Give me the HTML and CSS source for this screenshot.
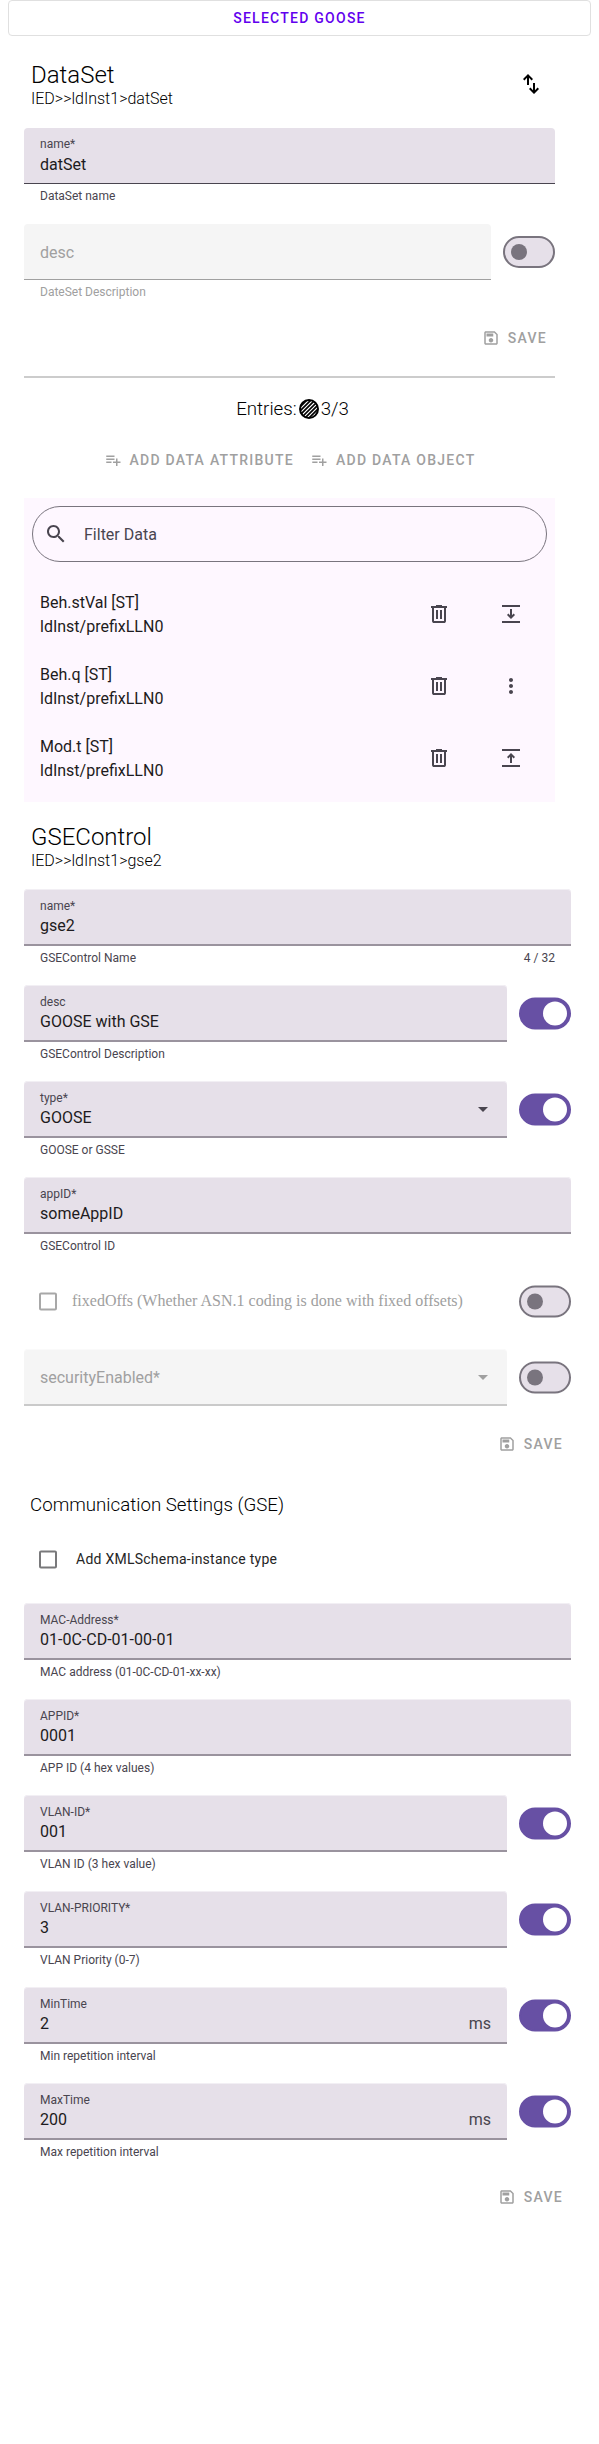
FILE: index.html
```html
<!DOCTYPE html>
<html lang="en">
<head>
<meta charset="utf-8">
<title>GOOSE editor</title>
<link rel="stylesheet" href="styles.css">
</head>
<body>
<svg class="defs" aria-hidden="true">
  <symbol id="save" viewBox="0 0 24 24"><path d="M17 3H5c-1.110 0-2 .9-2 2v14c0 1.100.89 2 2 2h14c1.100 0 2-.9 2-2V7l-4-4zm2 16H5V5h11.170L19 7.830V19zm-7-7c-1.660 0-3 1.340-3 3s1.340 3 3 3 3-1.340 3-3-1.340-3-3-3zM6 6h9v4H6z"/></symbol>
  <symbol id="add" viewBox="0 0 24 24"><path d="M14 10H3v2h11v-2zm0-4H3v2h11V6zm4 8v-4h-2v4h-4v2h4v4h2v-4h4v-2h-4zM3 16h7v-2H3v2z"/></symbol>
  <symbol id="trash" viewBox="0 -960 960 960"><path d="M280-120q-33 0-56.500-23.500T200-200v-520h-40v-80h200v-40h240v40h200v80h-40v520q0 33-23.500 56.500T680-120H280Zm400-600H280v520h400v-520ZM360-280h80v-360h-80v360Zm160 0h80v-360h-80v360ZM280-720v520-520Z"/></symbol>
  <symbol id="bottom" viewBox="0 0 24 24"><path d="M3 3h18v2H3zM3 19h18v2H3zM11 7h2v6.200l1.600-1.600L16 13l-4 4-4-4 1.400-1.400 1.600 1.600z"/></symbol>
  <symbol id="top" viewBox="0 0 24 24"><path d="M3 3h18v2H3zM3 19h18v2H3zM11 17h2v-6.200l1.600 1.600L16 11l-4-4-4 4 1.400 1.400 1.600-1.600z"/></symbol>
  <symbol id="more" viewBox="0 0 24 24"><path d="M12 8c1.100 0 2-.9 2-2s-.9-2-2-2-2 .9-2 2 .9 2 2 2zm0 2c-1.100 0-2 .9-2 2s.9 2 2 2 2-.9 2-2-.9-2-2-2zm0 6c-1.100 0-2 .9-2 2s.9 2 2 2 2-.9 2-2-.9-2-2-2z"/></symbol>
</svg>

<button class="select-button">SELECTED GOOSE</button>

<section class="dataset">
  <header class="header">
    <div>
      <h2>DataSet</h2>
      <p class="path">IED&gt;&gt;ldInst1&gt;datSet</p>
    </div>
    <svg class="icon swap" viewBox="0 -960 960 960"><path d="M320-440v-287L217-624l-57-56 200-200 200 200-57 56-103-103v287h-80ZM600-80 400-280l57-56 103 103v-287h80v287l103-103 57 56L600-80Z"/></svg>
  </header>
  <div class="row">
    <div class="field"><div class="box"><span class="label">name*</span><span class="value">datSet</span></div><div class="help"><span>DataSet name</span></div></div>
  </div>
  <div class="row">
    <div class="field disabled"><div class="box"><span class="placeholder">desc</span></div><div class="help"><span>DateSet Description</span></div></div>
    <div class="switch"><i></i></div>
  </div>
  <div class="save"><svg><use href="#save"/></svg>SAVE</div>
  <hr>
  <div class="entries">Entries:<svg class="hatched" viewBox="0 0 20 20"><defs><clipPath id="disc"><circle cx="10" cy="10" r="9"/></clipPath></defs><circle cx="10" cy="10" r="9" fill="#fff"/><path clip-path="url(#disc)" d="M-2 11 11-2M-2 15 15-2M-1 18 18-1M2 19 19 2M5 20 20 5M9 20 20 9" stroke="#000" stroke-width="1.700"/><circle cx="10" cy="10" r="9" fill="none" stroke="#000" stroke-width="2"/></svg>3/3</div>
  <div class="adders">
    <div class="action"><svg><use href="#add"/></svg>ADD DATA ATTRIBUTE</div>
    <div class="action"><svg><use href="#add"/></svg>ADD DATA OBJECT</div>
  </div>
  <div class="list">
    <div class="search"><svg class="icon" viewBox="0 0 24 24"><path d="M15.500 14h-.79l-.28-.27C15.410 12.590 16 11.110 16 9.500 16 5.910 13.090 3 9.500 3S3 5.910 3 9.500 5.910 16 9.500 16c1.610 0 3.090-.59 4.230-1.570l.27.28v.79l5 4.990L20.490 19l-4.990-5zm-6 0C7.010 14 5 11.990 5 9.500S7.010 5 9.500 5 14 7.010 14 9.500 11.990 14 9.500 14z"/></svg>Filter Data</div>
    <div class="item"><div class="names"><span>Beh.stVal [ST]</span><span>ldInst/prefixLLN0</span></div><svg class="icon"><use href="#trash"/></svg><svg class="icon"><use href="#bottom"/></svg></div>
    <div class="item"><div class="names"><span>Beh.q [ST]</span><span>ldInst/prefixLLN0</span></div><svg class="icon"><use href="#trash"/></svg><svg class="icon"><use href="#more"/></svg></div>
    <div class="item"><div class="names"><span>Mod.t [ST]</span><span>ldInst/prefixLLN0</span></div><svg class="icon"><use href="#trash"/></svg><svg class="icon"><use href="#top"/></svg></div>
  </div>
</section>

<section class="control">
  <header class="header">
    <div>
      <h2>GSEControl</h2>
      <p class="path">IED&gt;&gt;ldInst1&gt;gse2</p>
    </div>
  </header>
  <div class="row">
    <div class="field"><div class="box"><span class="label">name*</span><span class="value">gse2</span></div><div class="help"><span>GSEControl Name</span><span>4 / 32</span></div></div>
  </div>
  <div class="row">
    <div class="field"><div class="box"><span class="label">desc</span><span class="value">GOOSE with GSE</span></div><div class="help"><span>GSEControl Description</span></div></div>
    <div class="switch on"><i></i></div>
  </div>
  <div class="row">
    <div class="field"><div class="box select"><span class="label">type*</span><span class="value">GOOSE</span></div><div class="help"><span>GOOSE or GSSE</span></div></div>
    <div class="switch on"><i></i></div>
  </div>
  <div class="row">
    <div class="field"><div class="box"><span class="label">appID*</span><span class="value">someAppID</span></div><div class="help"><span>GSEControl ID</span></div></div>
  </div>
  <div class="row check-row">
    <div class="check muted"><i></i><span>fixedOffs (Whether ASN.1 coding is done with fixed offsets)</span></div>
    <div class="switch"><i></i></div>
  </div>
  <div class="row security">
    <div class="field disabled"><div class="box select"><span class="placeholder">securityEnabled*</span></div></div>
    <div class="switch"><i></i></div>
  </div>
  <div class="save"><svg><use href="#save"/></svg>SAVE</div>

  <h3>Communication Settings (GSE)</h3>
  <div class="check schema"><i></i><span>Add XMLSchema-instance type</span></div>
  <div class="row">
    <div class="field"><div class="box"><span class="label">MAC-Address*</span><span class="value">01-0C-CD-01-00-01</span></div><div class="help"><span>MAC address (01-0C-CD-01-xx-xx)</span></div></div>
  </div>
  <div class="row">
    <div class="field"><div class="box"><span class="label">APPID*</span><span class="value">0001</span></div><div class="help"><span>APP ID (4 hex values)</span></div></div>
  </div>
  <div class="row">
    <div class="field"><div class="box"><span class="label">VLAN-ID*</span><span class="value">001</span></div><div class="help"><span>VLAN ID (3 hex value)</span></div></div>
    <div class="switch on"><i></i></div>
  </div>
  <div class="row">
    <div class="field"><div class="box"><span class="label">VLAN-PRIORITY*</span><span class="value">3</span></div><div class="help"><span>VLAN Priority (0-7)</span></div></div>
    <div class="switch on"><i></i></div>
  </div>
  <div class="row">
    <div class="field"><div class="box"><span class="label">MinTime</span><span class="value">2<span class="suffix">ms</span></span></div><div class="help"><span>Min repetition interval</span></div></div>
    <div class="switch on"><i></i></div>
  </div>
  <div class="row">
    <div class="field"><div class="box"><span class="label">MaxTime</span><span class="value">200<span class="suffix">ms</span></span></div><div class="help"><span>Max repetition interval</span></div></div>
    <div class="switch on"><i></i></div>
  </div>
  <div class="save"><svg><use href="#save"/></svg>SAVE</div>
</section>
</body>
</html>
```
FILE: styles.css
```css
* { box-sizing: border-box; }
body { margin: 0; padding: 0 8px; min-height: 2444px; background: #fff; font-family: Roboto, sans-serif; color: #000; }
.defs { position: absolute; width: 0; height: 0; }
h2, h3, p { margin: 0; font-weight: 300; }
.select-button {
  display: block; width: 100%; height: 36px; padding: 0;
  border: 1px solid #e0e0e0; border-radius: 4px; background: #fff;
  font: 500 14px Roboto, sans-serif; letter-spacing: 1.25px; color: #6200ee;
}
.dataset { display: flex; flex-direction: column; padding: 20px 36px 0 16px; }
.control { display: flex; flex-direction: column; padding: 16px 20px 0 16px; }
.header { display: flex; justify-content: space-between; height: 72px; padding: 4px 12px 0 7px; }
.control .header { height: 71px; }
h2 { font-size: 24px; line-height: 30px; }
.path { padding-top: 1px; font-size: 16px; line-height: 16px; }
.icon { width: 24px; height: 24px; fill: #49454f; flex: none; }
.header .swap { fill: #000; margin-top: 12px; }

.row { display: flex; gap: 12px; height: 96px; }
.field { flex: 1; }
.box { position: relative; display: flex; flex-direction: column; height: 56px; padding: 8px 16px 0; background: #e6e0e9; border-radius: 4px 4px 0 0; border-bottom: 1px solid #49454f; }
.label { font-size: 12px; line-height: 16px; color: #49454f; }
.value { display: flex; justify-content: space-between; padding-top: 1px; font-size: 16px; line-height: 24px; color: #1d1b20; }
.suffix { color: #49454f; }
.help { display: flex; justify-content: space-between; padding: 4px 16px 0; font-size: 12px; line-height: 16px; color: #49454f; }
.disabled .box { background: #f5f5f5; border-color: #a0a0a0; }
.placeholder { padding-top: 9px; font-size: 16px; line-height: 24px; color: #a0a0a0; }
.disabled .help { color: #a0a0a0; }
.select::after { content: ""; position: absolute; right: 19px; top: 26px; border: 5px solid transparent; border-top-color: #49454f; border-bottom: 0; }
.disabled .select::after { border-top-color: #a0a0a0; }
.control .box { height: 57px; border-bottom: 2px solid #9a939e; box-shadow: inset 0 1px #f2eff4; padding-top: 9px; }
.control .value { padding-top: 0; }
.control .placeholder { padding-top: 8px; }
.control .disabled .box { border-bottom-color: #cacaca; box-shadow: inset 0 1px #fafafa; }

.switch { display: flex; align-items: center; width: 52px; height: 32px; margin-top: 12px; padding-left: 6px; border: 2px solid #79747e; border-radius: 16px; background: #e6e0e9; }
.switch i { width: 16px; height: 16px; border-radius: 50%; background: #79747e; }
.switch.on { padding-left: 22px; border-color: #6750a4; background: #6750a4; }
.switch.on i { width: 24px; height: 24px; background: #fff; }
.control .switch, .control .check i { transform: translateY(.5px); }

.save, .action { display: flex; align-items: center; height: 36px; gap: 8px; padding: 0 8px; font-size: 14px; font-weight: 500; letter-spacing: 1.25px; color: #a0a0a0; }
.save svg, .action svg { width: 18px; height: 18px; fill: currentColor; }
.save { align-self: flex-end; }
hr { width: 100%; height: 2px; margin: 20px 0 19px; border: 0; background: #ccc; }
.entries { display: flex; justify-content: center; align-items: center; height: 24px; font-size: 18.72px; font-weight: 300; padding-left: 6px; }
.hatched { width: 20px; height: 20px; margin: 0 2px; }
.adders { display: flex; justify-content: center; margin: 21px 0 20px; }

.list { height: 304px; padding: 8px; background: #fef7ff; }
.search { display: flex; align-items: center; gap: 16px; height: 56px; margin-bottom: 16px; padding: 0 12px 0 11px; border: 1px solid #79747e; border-radius: 28px; font-size: 16px; color: #49454f; }
.item { display: flex; align-items: center; height: 72px; padding: 0 24px 0 8px; gap: 48px; font-size: 16px; line-height: 24px; color: #1d1b20; }
.names { display: flex; flex-direction: column; flex: 1; padding-top: 2px; }

.check { display: flex; align-items: center; flex: 1; padding-left: 15px; }
.check i { width: 18px; height: 18px; border: 2px solid #79797b; border-radius: 2px; }
.check-row { height: 56px; }
.check-row + .security { margin-top: 20px; height: 77px; }
.muted { font: 16px "Liberation Serif", serif; color: #a0a0a0; gap: 15px; }
.muted i { border-color: #a8a8a8; }
h3 { font-size: 18.72px; line-height: 24px; margin: 31px 0 0 6px; }
.schema { flex: none; height: 56px; margin: 14px 0 16px; gap: 19px; font-size: 14px; letter-spacing: .25px; color: #252525; }
```
